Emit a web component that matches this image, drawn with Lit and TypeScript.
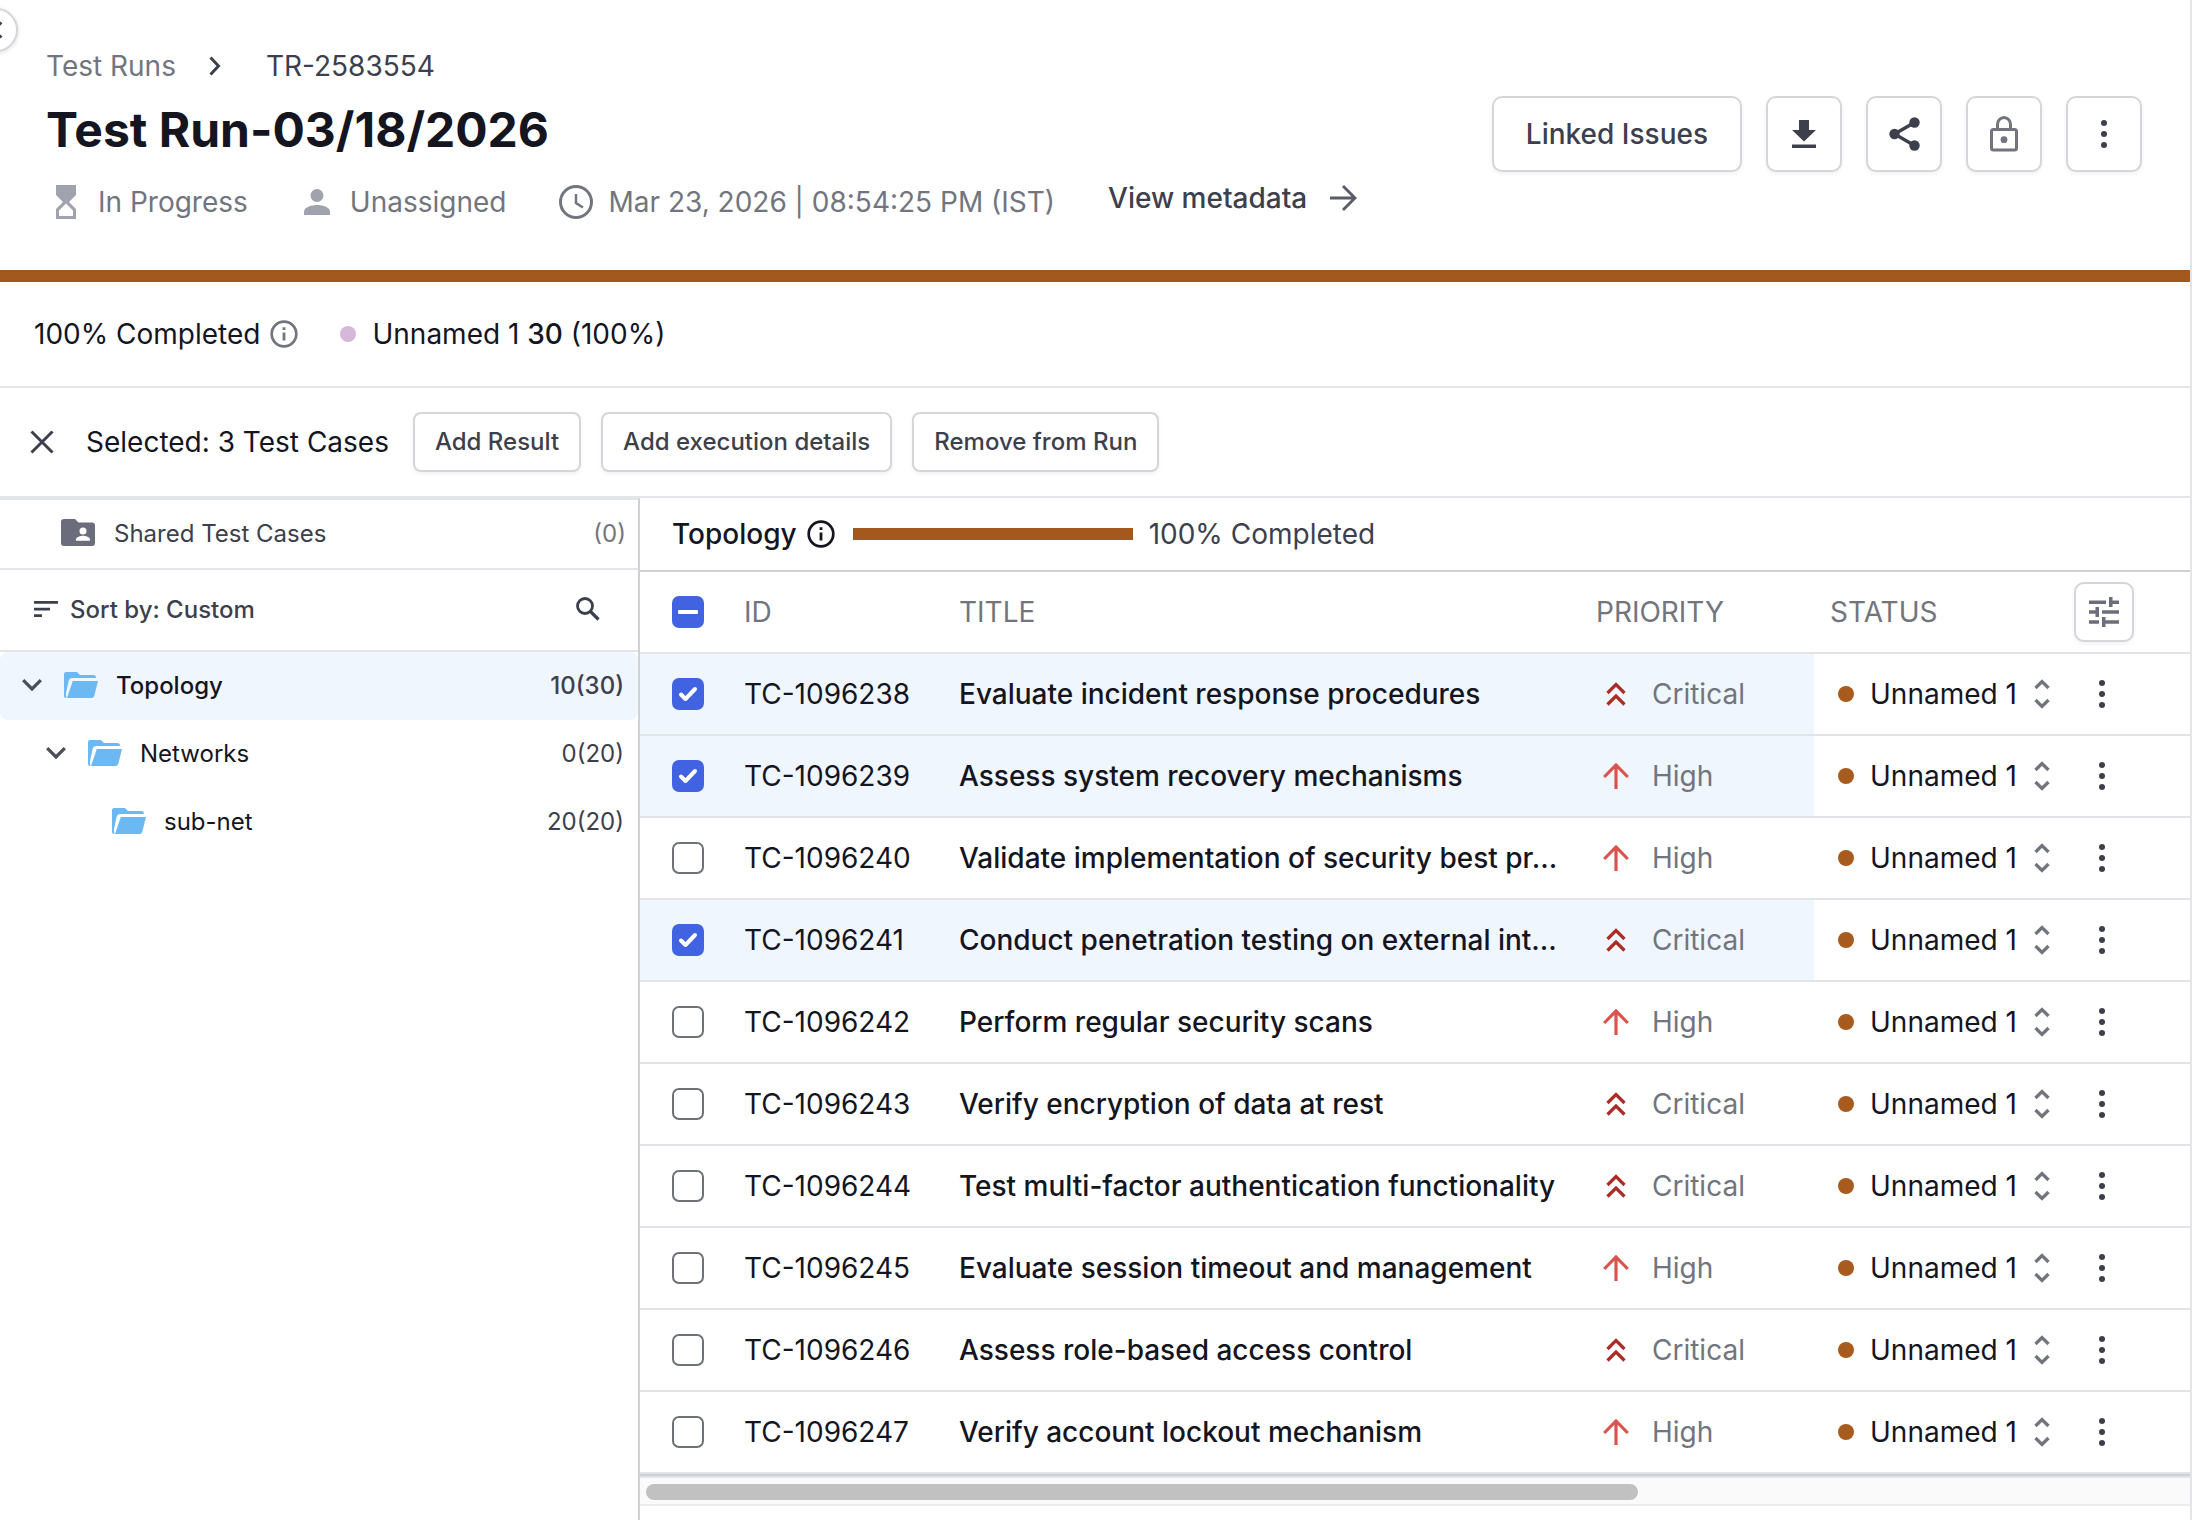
import { LitElement, html, css, svg, nothing } from "lit";
import { customElement, property, state } from "lit/decorators.js";
import { classMap } from "lit/directives/class-map.js";

type Priority = "Critical" | "High";

interface TestCase {
  id: string;
  title: string;
  priority: Priority;
  selected: boolean;
}

interface Folder {
  name: string;
  count: string;
  depth: number;
  open: boolean;
  active: boolean;
}

const CASES: TestCase[] = [
  { id: "TC-1096238", title: "Evaluate incident response procedures", priority: "Critical", selected: true },
  { id: "TC-1096239", title: "Assess system recovery mechanisms", priority: "High", selected: true },
  { id: "TC-1096240", title: "Validate implementation of security best pr…", priority: "High", selected: false },
  { id: "TC-1096241", title: "Conduct penetration testing on external int…", priority: "Critical", selected: true },
  { id: "TC-1096242", title: "Perform regular security scans", priority: "High", selected: false },
  { id: "TC-1096243", title: "Verify encryption of data at rest", priority: "Critical", selected: false },
  { id: "TC-1096244", title: "Test multi-factor authentication functionality", priority: "Critical", selected: false },
  { id: "TC-1096245", title: "Evaluate session timeout and management", priority: "High", selected: false },
  { id: "TC-1096246", title: "Assess role-based access control", priority: "Critical", selected: false },
  { id: "TC-1096247", title: "Verify account lockout mechanism", priority: "High", selected: false },
];

const FOLDERS: Folder[] = [
  { name: "Topology", count: "10(30)", depth: 0, open: true, active: true },
  { name: "Networks", count: "0(20)", depth: 1, open: true, active: false },
  { name: "sub-net", count: "20(20)", depth: 2, open: false, active: false },
];

/* Each glyph is drawn on its own view box and takes the current colour. */
const GLYPHS = {
  collapse: { box: "0 0 24 24", art: svg`<path d="M17.500 4.500L10 12l7.500 7.500" fill="none" stroke="currentColor" stroke-width="2.500"/>` },
  crumb: { box: "0 0 12 20", art: svg`<path d="M1.500 1.500L9.500 10l-8 8.500" fill="none" stroke="currentColor" stroke-width="3"/>` },
  hourglass: { box: "0 0 20 34", art: svg`<path fill-rule="evenodd" d="M0 0h20v10l-7 7 7 7v10H0V24l7-7-7-7zM10 18.500L3 25.500V31h14v-5.500z" fill="currentColor"/>` },
  person: { box: "0 0 26 26", art: svg`<circle cx="13" cy="6.500" r="6.500" fill="currentColor"/><path d="M0 26v-3.500C0 18 8.500 16 13 16s13 2 13 6.500V26z" fill="currentColor"/>` },
  clock: { box: "0 0 34 34", art: svg`<circle cx="17" cy="17" r="15.500" fill="none" stroke="currentColor" stroke-width="3"/><path d="M17 9v9l7 4.500" fill="none" stroke="currentColor" stroke-width="2.500"/>` },
  arrowRight: { box: "0 0 28 28", art: svg`<path d="M1 14h25M14 2l12 12-12 12" fill="none" stroke="currentColor" stroke-width="2.900"/>` },
  download: { box: "0 0 24 28", art: svg`<path d="M7 0h10v10h7L12 21.500 0 10h7z" fill="currentColor"/><path d="M0 24.500h24V28H0z" fill="currentColor"/>` },
  share: { box: "0 0 31 34", art: svg`<path d="M25.500 5.500L5.500 17l20 11.500" fill="none" stroke="currentColor" stroke-width="3.400"/><circle cx="25.500" cy="5.500" r="5.200" fill="currentColor"/><circle cx="5.500" cy="17" r="5.200" fill="currentColor"/><circle cx="25.500" cy="28.500" r="5.200" fill="currentColor"/>` },
  lock: { box: "0 0 28 36", art: svg`<rect x="1.500" y="13.500" width="25" height="20.500" rx="2" fill="none" stroke="currentColor" stroke-width="3"/><path d="M7.500 13V8.500a6.500 7 0 0 1 13 0V13" fill="none" stroke="currentColor" stroke-width="3"/><circle cx="14" cy="23.700" r="3.400" fill="currentColor"/>` },
  dots: { box: "0 0 8 28", art: svg`<circle cx="4" cy="3" r="3" fill="currentColor"/><circle cx="4" cy="14" r="3" fill="currentColor"/><circle cx="4" cy="25" r="3" fill="currentColor"/>` },
  info: { box: "0 0 28 28", art: svg`<circle cx="14" cy="14" r="12.300" fill="none" stroke="currentColor" stroke-width="2.700"/><path d="M12.600 12.500h2.800v8h-2.800zM12.600 7.300h2.800v2.800h-2.800z" fill="currentColor"/>` },
  close: { box: "0 0 24 24", art: svg`<path d="M1.500 1.500l21 21M22.500 1.500l-21 21" fill="none" stroke="currentColor" stroke-width="3"/>` },
  shared: { box: "0 0 34 28", art: svg`<path fill-rule="evenodd" d="M3 0h11l3.500 3.500H31a3 3 0 0 1 3 3V24a3 3 0 0 1-3 3H3a3 3 0 0 1-3-3V3a3 3 0 0 1 3-3zM22 8.500a3.500 3.500 0 1 0 0 7A3.500 3.500 0 0 0 22 8.500zM15 21.800h14v-1.400c0-2.400-4.600-3.600-7-3.600s-7 1.200-7 3.600z" fill="currentColor"/>` },
  sort: { box: "0 0 24 16", art: svg`<path d="M0 0h24v2.700H0zM0 6.700h16v2.700H0zM0 13.300h8V16H0z" fill="currentColor"/>` },
  search: { box: "0 0 24 24", art: svg`<circle cx="9" cy="9" r="7.500" fill="none" stroke="currentColor" stroke-width="2.800"/><path d="M14.500 14.500l8 8" fill="none" stroke="currentColor" stroke-width="3.200"/>` },
  chevron: { box: "0 0 20 12", art: svg`<path d="M1.200 1.200L10 10l8.800-8.800" fill="none" stroke="currentColor" stroke-width="3.200"/>` },
  folder: { box: "0 0 34 26", art: svg`<path d="M2 0h11l3 3h13a3 3 0 0 1 3 3H8A3.500 3.500 0 0 0 4.700 8.700L1.800 22 2.500 26H2a2 2 0 0 1-2-2V2a2 2 0 0 1 2-2z" fill="currentColor"/><path d="M8.800 9H34l-3.700 14.800A3 3 0 0 1 27.400 26H3z" fill="currentColor"/>` },
  tune: { box: "0 0 30 30", art: svg`<path d="M0 3.500h17v3.500H0zM20 0h3.500v3.500H30V7h-6.500v3H20zM13 13.200h17v3.500H13zM0 13.200h6.500V10H10v10H6.500v-3.300H0zM0 23.200h10v3.500H0zM13 20h3.500v3.200H30v3.500H16.500V30H13z" fill="currentColor"/>` },
  critical: { box: "0 0 20 24", art: svg`<path d="M1.500 11L10 2.500l8.500 8.500M1.500 22.500L10 14l8.500 8.500" fill="none" stroke="currentColor" stroke-width="3.200"/>` },
  high: { box: "0 0 26 26", art: svg`<path d="M13 26V2M1.200 14L13 2l11.800 12" fill="none" stroke="currentColor" stroke-width="3.200"/>` },
  updown: { box: "0 0 16 30", art: svg`<path d="M1.500 9L8 2.500 14.500 9M1.500 21L8 27.500l6.500-6.500" fill="none" stroke="currentColor" stroke-width="3.300"/>` },
};

type GlyphName = keyof typeof GLYPHS;

@customElement("ui-icon")
class UiIcon extends LitElement {
  static styles = css`
    :host { display: inline-flex; flex: none; }
    svg { display: block; }
  `;

  @property() name: GlyphName = "dots";

  render() {
    const glyph = GLYPHS[this.name];
    const [, , w, h] = glyph.box.split(" ");
    return html`<svg viewBox=${glyph.box} width=${w} height=${h} aria-hidden="true">${glyph.art}</svg>`;
  }
}

const controls = css`
  * { box-sizing: border-box; }
  button, select, input { font: inherit; color: inherit; margin: 0; }
  button { display: inline-flex; align-items: center; justify-content: center; background: none; border: 0; padding: 0; cursor: pointer; }
  a { color: inherit; text-decoration: none; }
  .outlined { border: 2px solid #d5d6d9; border-radius: 10px; background: #fff; box-shadow: 0 2px 4px rgba(16, 24, 40, 0.06); color: #3d404c; font-weight: 500; }
`;

@customElement("run-header")
class RunHeader extends LitElement {
  static styles = [controls, css`
    :host { display: block; position: relative; }
    .collapse { position: absolute; left: -26px; top: 8px; width: 44px; height: 44px; border: 2px solid #d5d6d9; border-radius: 50%; background: #fff; box-shadow: 0 1px 4px rgba(16, 24, 40, 0.15); color: #3d404c; overflow: hidden; }
    .bar { display: flex; justify-content: space-between; gap: 24px; height: 270px; padding: 48px 48px 0 46px; }
    .crumbs { display: flex; align-items: center; line-height: 36px; color: #72757e; }
    .crumbs ui-icon { margin: 0 45px 0 33px; color: #3d404c; }
    .here { color: #3d404c; }
    h1 { margin: 16px 0 0; font-size: 48px; line-height: 60px; font-weight: 700; color: #14151f; }
    .meta { display: flex; align-items: center; margin-top: 20px; line-height: 36px; color: #72757e; }
    .meta span { display: flex; align-items: center; }
    .state ui-icon { margin: 0 22px 0 10px; }
    .state ui-icon, .owner ui-icon { color: #a0a3ad; }
    .owner { margin-left: 56px; }
    .owner ui-icon { margin-right: 20px; }
    .date { margin-left: 53px; }
    .date ui-icon { margin-right: 15px; }
    .more { display: flex; align-items: center; gap: 22px; margin: 0 0 8px 53px; color: #3d404c; font-weight: 500; }
    .more ui-icon { color: #5a5d66; }
    .actions { display: flex; gap: 24px; margin-top: 48px; }
    .actions button { width: 76px; height: 76px; }
    .actions .wide { width: auto; padding: 0 32px; }
    .actions .muted { color: #72757e; }
    .progress { height: 12px; background: #a3591d; }
  `];

  render() {
    return html`
      <div class="bar">
        <div>
          <nav class="crumbs" aria-label="Breadcrumb">
            <a href="#runs">Test Runs</a><ui-icon name="crumb"></ui-icon><span class="here">TR-2583554</span>
          </nav>
          <h1>Test Run-03/18/2026</h1>
          <div class="meta">
            <span class="state"><ui-icon name="hourglass"></ui-icon>In Progress</span>
            <span class="owner"><ui-icon name="person"></ui-icon>Unassigned</span>
            <span class="date"><ui-icon name="clock"></ui-icon>Mar 23, 2026 | 08:54:25 PM (IST)</span>
            <a class="more" href="#metadata">View metadata<ui-icon name="arrowRight"></ui-icon></a>
          </div>
        </div>
        <div class="actions">
          <button class="outlined wide">Linked Issues</button>
          <button class="outlined" aria-label="Download"><ui-icon name="download"></ui-icon></button>
          <button class="outlined" aria-label="Share"><ui-icon name="share"></ui-icon></button>
          <button class="outlined muted" aria-label="Lock"><ui-icon name="lock"></ui-icon></button>
          <button class="outlined" aria-label="More actions"><ui-icon name="dots"></ui-icon></button>
        </div>
      </div>
      <div class="progress"></div>
      <button class="collapse" aria-label="Expand panel"><ui-icon name="collapse"></ui-icon></button>
    `;
  }
}

@customElement("folder-tree")
class FolderTree extends LitElement {
  static styles = [controls, css`
    :host { display: block; border-top: 2px solid #e4e5e9; border-right: 2px solid #d0d1d5; font-size: 24px; color: #14151f; }
    .shared { display: flex; align-items: center; gap: 19px; height: 70px; padding: 0 12px 2px 61px; border-bottom: 2px solid #e4e5e9; color: #3d404c; }
    .shared ui-icon { color: #6b6d7c; }
    .count { margin-left: auto; color: #3d404c; }
    .shared .count { color: #72757e; }
    .sort { display: flex; align-items: center; justify-content: space-between; height: 82px; padding: 0 38px 2px 34px; border-bottom: 2px solid #e2e4e8; color: #3d404c; font-weight: 500; }
    .sort button { gap: 12px; }
    ul { list-style: none; margin: 0; padding: 0; }
    .node { display: flex; align-items: center; height: 68px; padding: 0 14px 2px 22px; border-radius: 8px; }
    .active { background: #f0f6fe; font-weight: 500; }
    .indent { flex: none; width: 24px; }
    .toggle { width: 20px; height: 32px; margin-right: 22px; color: #4b4e59; }
    .folder { margin-right: 18px; color: #6cb8f2; }
  `];

  render() {
    return html`
      <div class="shared"><ui-icon name="shared"></ui-icon>Shared Test Cases<span class="count">(0)</span></div>
      <div class="sort">
        <button><ui-icon name="sort"></ui-icon>Sort by: Custom</button>
        <button aria-label="Search"><ui-icon name="search"></ui-icon></button>
      </div>
      <ul>
        ${FOLDERS.map((f) => html`
          <li class=${classMap({ node: true, active: f.active })}>
            ${Array.from({ length: f.depth }, () => html`<span class="indent"></span>`)}
            ${f.open
              ? html`<button class="toggle" aria-label=${`Toggle ${f.name}`}><ui-icon name="chevron"></ui-icon></button>`
              : html`<span class="toggle"></span>`}
            <ui-icon class="folder" name="folder"></ui-icon>
            <span>${f.name}</span>
            <span class="count">${f.count}</span>
          </li>`)}
      </ul>
    `;
  }
}

@customElement("case-table")
class CaseTable extends LitElement {
  static styles = [controls, css`
    :host { display: block; min-width: 0; color: #14151f; }
    .caption { display: flex; align-items: center; height: 74px; padding: 0 32px; border-bottom: 2px solid #d0d1d5; }
    h2 { margin: 0 10px 0 0; font-size: 28px; font-weight: 500; }
    .meter { width: 280px; height: 12px; margin: 0 16px 0 18px; background: #a3591d; }
    .done { color: #3d404c; }
    table { width: 100%; table-layout: fixed; border-spacing: 0; }
    th, td { height: 82px; padding: 0; border-bottom: 2px solid #e2e4e8; text-align: left; }
    th { font-weight: 400; color: #72757e; }
    .c-check { width: 104px; }
    .c-id { width: 215px; }
    .c-priority { width: 218px; }
    .c-status { width: 230px; }
    .c-more { width: 146px; }
    .check { padding-left: 32px; }
    .title { padding-right: 24px; overflow: hidden; text-overflow: ellipsis; white-space: nowrap; }
    td.title { font-weight: 500; }
    .selected td { background: #f0f6fe; }
    .selected .pinned { background: #fff; }
    .box { display: block; appearance: none; width: 32px; height: 32px; border: 2px solid #6f7178; border-radius: 7px; background: #fff; }
    .box:checked, .box:indeterminate { border: 0; background: #4163e1 center / 32px no-repeat; }
    .box:checked { background-image: url("data:image/svg+xml,%3Csvg xmlns='http://www.w3.org/2000/svg' viewBox='0 0 32 32'%3E%3Cpath d='M9 16.500l4.500 4.500L23 11' fill='none' stroke='white' stroke-width='4' stroke-linecap='round' stroke-linejoin='round'/%3E%3C/svg%3E"); }
    .box:indeterminate { background-image: url("data:image/svg+xml,%3Csvg xmlns='http://www.w3.org/2000/svg' viewBox='0 0 32 32'%3E%3Crect x='6' y='14' width='20' height='4' rx='1' fill='white'/%3E%3C/svg%3E"); }
    .priority { display: flex; align-items: center; color: #72757e; }
    .mark { display: flex; justify-content: center; width: 40px; margin-right: 16px; color: #d9544d; }
    .severe { color: #ab2b26; }
    .status { display: flex; align-items: center; padding-left: 24px; }
    .dot { flex: none; width: 16px; height: 16px; margin-right: 16px; border-radius: 50%; background: #a85b1e; }
    select { appearance: none; border: 0; background: none; padding: 0 33px 0 0; font-weight: 400; }
    .status ui-icon { margin-left: -16px; color: #72757e; pointer-events: none; }
    .status-head { padding-left: 16px; }
    .tune { width: 60px; height: 60px; margin-left: 30px; color: #6b6d7c; }
    .menu { width: 32px; height: 48px; margin-left: 42px; color: #3d404c; }
    .scroll { height: 32px; padding-top: 8px; border-top: 2px solid #d0d1d5; border-bottom: 2px solid #ececee; background: #fafafa; box-shadow: inset 0 2px #e2e4e8; }
    .thumb { width: 64%; height: 16px; margin-left: 6px; border-radius: 8px; background: #c1c1c1; }
  `];

  @state() private cases = CASES;

  private toggle(id: string) {
    this.cases = this.cases.map((c) => (c.id === id ? { ...c, selected: !c.selected } : c));
  }

  render() {
    const some = this.cases.some((c) => c.selected);
    const all = this.cases.every((c) => c.selected);
    return html`
      <div class="caption">
        <h2>Topology</h2><ui-icon name="info"></ui-icon>
        <div class="meter"></div><span class="done">100% Completed</span>
      </div>
      <table>
        <colgroup><col class="c-check"><col class="c-id"><col><col class="c-priority"><col class="c-status"><col class="c-more"></colgroup>
        <thead>
          <tr>
            <th class="check"><input class="box" type="checkbox" aria-label="Select all" .indeterminate=${some && !all} .checked=${all}></th>
            <th>ID</th>
            <th class="title">TITLE</th>
            <th>PRIORITY</th>
            <th class="status-head">STATUS</th>
            <th><button class="outlined tune" aria-label="Columns"><ui-icon name="tune"></ui-icon></button></th>
          </tr>
        </thead>
        <tbody>
          ${this.cases.map((c) => html`
            <tr class=${classMap({ selected: c.selected })}>
              <td class="check"><input class="box" type="checkbox" aria-label=${`Select ${c.id}`} .checked=${c.selected} @change=${() => this.toggle(c.id)}></td>
              <td>${c.id}</td>
              <td class="title">${c.title}</td>
              <td><div class="priority"><span class=${classMap({ mark: true, severe: c.priority === "Critical" })}><ui-icon name=${c.priority === "Critical" ? "critical" : "high"}></ui-icon></span>${c.priority}</div></td>
              <td class="pinned"><div class="status"><span class="dot"></span><select aria-label=${`Status of ${c.id}`}><option>Unnamed 1</option></select><ui-icon name="updown"></ui-icon></div></td>
              <td class="pinned"><button class="menu" aria-label=${`Actions for ${c.id}`}><ui-icon name="dots"></ui-icon></button></td>
            </tr>`)}
        </tbody>
      </table>
      <div class="scroll"><div class="thumb"></div></div>
    `;
  }
}

@customElement("app-root")
class AppRoot extends LitElement {
  static styles = [controls, css`
    :host { display: flex; flex-direction: column; min-height: 100vh; margin-right: 2px; border-right: 2px solid #e4e5e9; background: #fff; font-family: Inter, "Liberation Sans", sans-serif; font-size: 28px; color: #14151f; overflow: hidden; box-sizing: border-box; }
    .summary { display: flex; align-items: center; height: 106px; padding: 0 34px; border-bottom: 2px solid #e4e5e9; }
    .summary ui-icon { margin: 0 42px 0 10px; color: #72757e; }
    .dot { width: 16px; height: 16px; margin-right: 16px; border-radius: 50%; background: #d8b8da; }
    .summary strong { font-weight: 500; }
    .bulk { display: flex; align-items: center; height: 110px; padding: 0 30px; border-bottom: 2px solid #e4e5e9; }
    .clear { margin-right: 32px; color: #3d404c; }
    .chosen { margin-right: 24px; }
    .group { display: flex; gap: 20px; }
    .group button { height: 60px; padding: 0 20px 2px; border-radius: 8px; font-size: 24px; }
    .body { flex: 1; display: grid; grid-template-columns: 640px minmax(0, 1fr); }
  `];

  render() {
    return html`
      <run-header></run-header>
      <div class="summary">
        <span>100% Completed</span><ui-icon name="info"></ui-icon>
        <span class="dot"></span><span>Unnamed 1 <strong>30</strong> (100%)</span>
      </div>
      <div class="bulk">
        <button class="clear" aria-label="Clear selection"><ui-icon name="close"></ui-icon></button>
        <span class="chosen">Selected: 3 Test Cases</span>
        <div class="group">
          <button class="outlined">Add Result</button>
          <button class="outlined">Add execution details</button>
          <button class="outlined">Remove from Run</button>
        </div>
      </div>
      <main class="body">
        <folder-tree></folder-tree>
        <case-table></case-table>
      </main>
    `;
  }
}
